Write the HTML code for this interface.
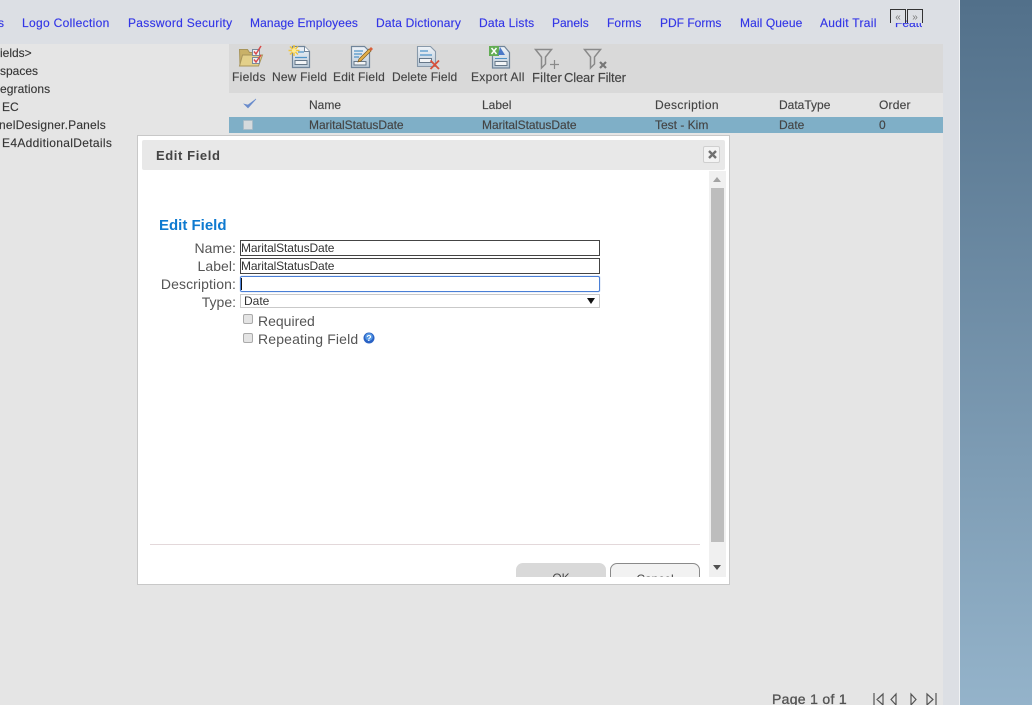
<!DOCTYPE html>
<html><head><meta charset="utf-8"><style>
html,body{margin:0;padding:0;width:1032px;height:705px;overflow:hidden;background:#e5e5e5;font-family:"Liberation Sans",Arial,sans-serif}
#p{position:relative;width:1032px;height:705px;overflow:hidden}
.a,.t,.n,.d{position:absolute}
.t,.n,.d{white-space:nowrap;line-height:14px}
.n{top:16px;font-size:12px;color:#3336e6;-webkit-text-stroke:.15px #3336e6}
.t{font-size:12px;color:#444;-webkit-text-stroke:.15px #444}
.d{font-size:14px;color:#555;text-align:right;line-height:16px}
.box{position:absolute;box-sizing:border-box;left:240px;width:360px;height:16px;border:1px solid #444;background:#fff;font-size:12px;line-height:14px;color:#333;padding-left:0;white-space:nowrap;letter-spacing:-.12px}
svg{position:absolute;overflow:visible}
</style></head><body><div id="p">
<div class="a" style="left:0;top:0;width:959px;height:705px;background:#dcdfe4"></div>
<div class="a" style="left:0;top:44px;width:943px;height:661px;background:#e5e5e5"></div>
<div class="a" style="left:959px;top:0;width:1px;height:705px;background:#f0f2f4"></div>
<div class="a" style="left:960px;top:0;width:72px;height:705px;background:linear-gradient(#52708a,#94b3ca)"></div>

<div class="n" style="left:-2px">s</div>
<div class="n" style="left:22px;letter-spacing:.33px">Logo Collection</div>
<div class="n" style="left:128px;letter-spacing:.3px">Password Security</div>
<div class="n" style="left:250px;letter-spacing:.12px">Manage Employees</div>
<div class="n" style="left:376px;letter-spacing:.2px">Data Dictionary</div>
<div class="n" style="left:479px;letter-spacing:.2px">Data Lists</div>
<div class="n" style="left:552px">Panels</div>
<div class="n" style="left:607px;letter-spacing:.1px">Forms</div>
<div class="n" style="left:660px">PDF Forms</div>
<div class="n" style="left:740px;letter-spacing:.1px">Mail Queue</div>
<div class="n" style="left:820px;letter-spacing:.3px">Audit Trail</div>
<div class="n" style="left:895px;width:27px;overflow:hidden;height:14px">Features</div>
<div class="a" style="left:890px;top:9px;width:14px;height:13px;border:1px solid #333;border-bottom:0;background:#dcdfe4;font-size:10px;line-height:16px;text-align:center;color:#777">«</div>
<div class="a" style="left:907px;top:9px;width:14px;height:13px;border:1px solid #333;border-bottom:0;background:#dcdfe4;font-size:10px;line-height:16px;text-align:center;color:#777">»</div>

<div class="t" style="left:0;top:46px;color:#333">ields&gt;</div>
<div class="t" style="left:0;top:64px;color:#333">spaces</div>
<div class="t" style="left:0;top:82px;color:#333;letter-spacing:.1px">egrations</div>
<div class="t" style="left:2px;top:100px;color:#333">EC</div>
<div class="t" style="left:-1px;top:118px;color:#333;letter-spacing:.2px">nelDesigner.Panels</div>
<div class="t" style="left:2px;top:136px;color:#333;letter-spacing:.32px">E4AdditionalDetails</div>

<div class="a" style="left:229px;top:44px;width:714px;height:49px;background:#d9d9d9"></div>
<div class="a" style="left:229px;top:117px;width:714px;height:16px;background:#7fafc7"></div>

<!-- Toolbar icons -->
<svg style="left:238px;top:45px" width="26" height="23" viewBox="0 0 26 23">
<path d="M1.500 4.500h8l2 3h9v13H2z" fill="#c9b168" stroke="#a8955a"/><path d="M1.500 21l3-11h20l-4 11z" fill="#e3d08a" stroke="#a8955a"/>
<rect x="14.500" y="4.500" width="7" height="6" fill="#eef2f6" stroke="#7a8a9a"/><rect x="14.500" y="12.500" width="7" height="6" fill="#eef2f6" stroke="#7a8a9a"/>
<path d="M16 6.500l2 2.500 5-8M16 14.500l2 2.500 5-7" fill="none" stroke="#d84a4a" stroke-width="1.500"/></svg>
<svg style="left:288px;top:45px" width="24" height="24" viewBox="0 0 24 24">
<defs><linearGradient id="g" x1="0" y1="0" x2="0" y2="1"><stop offset="0" stop-color="#eef3f8"/><stop offset="1" stop-color="#bccbd9"/></linearGradient></defs>
<path d="M4.500 1.500h12l5 5v16h-17z" fill="url(#g)" stroke="#70859a" stroke-width="1.200"/><path d="M16.500 1.500v5h5" fill="#fff" stroke="#70859a"/>
<path d="M10 7h6M7 12.500h12" stroke="#4f94c8" stroke-width="1.200"/><rect x="7" y="15.500" width="12" height="4" fill="#f2f4f6" stroke="#667788"/>
<path d="M6 0v11M.5 5.500h11M2 1.500l8 8M10 1.500l-8 8" stroke="#f2c63a" stroke-width="1.500"/><circle cx="6" cy="5.500" r="2.200" fill="#ffeb90"/></svg>
<svg style="left:350px;top:45px" width="24" height="24" viewBox="0 0 24 24">
<path d="M1.500 1.500h13l5 5v16h-18z" fill="url(#g)" stroke="#70859a" stroke-width="1.200"/><path d="M4 6h9M4 9h8M4 12h5" stroke="#4f94c8" stroke-width="1.200"/><rect x="4" y="16.500" width="12" height="3.500" fill="#f2f4f6" stroke="#667788"/>
<path d="M9 14l10-10 2 2-10 10-3 1z" fill="#e4b04a" stroke="#7a5a20" stroke-width=".7"/><path d="M19 4l2-2 2 2-2 2z" fill="#d9603a"/></svg>
<svg style="left:417px;top:45px" width="24" height="25" viewBox="0 0 24 25">
<path d="M.5 1.500h13l5 5v15h-18z" fill="url(#g)" stroke="#8899aa" stroke-width="1.100"/><path d="M3 6h8M3 10h12" stroke="#4f94c8" stroke-width="1.200"/><rect x="2.500" y="13.500" width="12" height="4" fill="#f2f4f6" stroke="#667788"/>
<path d="M13.500 15.500l8.500 8.500M22 15.500l-8.500 8.500" stroke="#d8503a" stroke-width="1.800"/></svg>
<svg style="left:489px;top:45px" width="24" height="25" viewBox="0 0 24 25">
<path d="M3.500 1.500h12l5 6v15.500h-17z" fill="url(#g)" stroke="#70859a" stroke-width="1.200"/><rect x="0" y="1" width="10" height="10" fill="#63ad55"/><path d="M2.500 3l5 6M7.500 3l-5 6" stroke="#fff" stroke-width="1.500"/>
<path d="M11 2l5 8h-7z" fill="#4a78c8"/><rect x="6" y="16.500" width="12" height="4" fill="#f2f4f6" stroke="#667788"/><path d="M6 13.500h12" stroke="#4f94c8"/></svg>
<svg style="left:534px;top:48px" width="26" height="22" viewBox="0 0 26 22">
<path d="M1.500 1.500h16l-6 7.500v7l-4 4v-11z" fill="none" stroke="#8a8a8a" stroke-width="1.500"/><path d="M16 16.500h9M20.500 12v9" stroke="#8a8a8a" stroke-width="1.200"/></svg>
<svg style="left:583px;top:48px" width="26" height="22" viewBox="0 0 26 22">
<path d="M1.500 1.500h16l-6 7.500v7l-4 4v-11z" fill="none" stroke="#8a8a8a" stroke-width="1.500"/><path d="M17 14l6 6M23 14l-6 6" stroke="#777" stroke-width="2.200"/></svg>

<div class="t" style="left:232px;top:70px;letter-spacing:.3px">Fields</div>
<div class="t" style="left:272px;top:70px;letter-spacing:.2px">New Field</div>
<div class="t" style="left:333px;top:70px;letter-spacing:.2px">Edit Field</div>
<div class="t" style="left:392px;top:70px;letter-spacing:.1px">Delete Field</div>
<div class="t" style="left:471px;top:70px;letter-spacing:.3px">Export All</div>
<div class="t" style="left:532px;top:71px;font-size:13px;letter-spacing:.2px">Filter</div>
<div class="t" style="left:564px;top:71px;font-size:13px;letter-spacing:-.15px">Clear Filter</div>

<!-- Grid -->
<svg style="left:243px;top:98px" width="14" height="11" viewBox="0 0 14 11"><path d="M1 6l4 4 8-9-8 6z" fill="#6a8ccc" stroke="#6a8ccc" stroke-width=".6"/></svg>
<div class="t" style="left:309px;top:98px">Name</div>
<div class="t" style="left:482px;top:98px">Label</div>
<div class="t" style="left:655px;top:98px;letter-spacing:.35px">Description</div>
<div class="t" style="left:779px;top:98px">DataType</div>
<div class="t" style="left:879px;top:98px;letter-spacing:.2px">Order</div>
<div class="a" style="left:243px;top:120px;width:8px;height:8px;background:#d5dadd;border:1px solid #a9bcc8;border-radius:1px"></div>
<div class="t" style="left:309px;top:118px;letter-spacing:-.05px">MaritalStatusDate</div>
<div class="t" style="left:482px;top:118px;letter-spacing:-.05px">MaritalStatusDate</div>
<div class="t" style="left:655px;top:118px">Test - Kim</div>
<div class="t" style="left:779px;top:118px">Date</div>
<div class="t" style="left:879px;top:118px">0</div>

<div class="t" style="left:772px;top:691px;font-size:14px;line-height:16px;color:#555;letter-spacing:.3px;-webkit-text-stroke:.35px #555">Page 1 of 1</div>
<svg style="left:873px;top:693px" width="66" height="12" viewBox="0 0 66 12" fill="none" stroke="#555" stroke-width="1.200">
<path d="M1 0v12M10 1L4 6.500l6 5.500zM23 1l-5 5.500 5 5.500zM38 1l5 5.500-5 5.500zM54 1l6 5.500-6 5.500zM63 0v12"/></svg>

<!-- Dialog -->
<div class="a" style="left:137px;top:135px;width:591px;height:448px;background:#fff;border:1px solid #c8c8c8;overflow:hidden">
 <div class="a" style="left:4px;top:4px;width:583px;height:30px;background:#e8e8e8;border-radius:2px"></div>
 <div class="a" style="left:18px;top:12px;font-size:13px;line-height:15px;font-weight:bold;color:#444;letter-spacing:.6px">Edit Field</div>
 <div class="a" style="left:565px;top:10px;width:15px;height:15px;background:#f3f3f3;border:1px solid #cfcfcf;border-radius:2px"></div>
 <svg style="left:570px;top:14px" width="9" height="9" viewBox="0 0 9 9"><path d="M1 1l7 7M8 1l-7 7" stroke="#707070" stroke-width="2.400"/></svg>
 <div class="a" style="left:0;top:0;width:591px;height:441px;overflow:hidden">
  <div class="a" style="left:571px;top:35px;width:17px;height:406px;background:#f0f0f0"></div>
  <div class="a" style="left:573px;top:52px;width:13px;height:354px;background:#bdbdbd"></div>
  <svg style="left:575px;top:41px" width="9" height="5"><path d="M0 5L4 0l4 5z" fill="#a3a3a3"/></svg>
  <svg style="left:575px;top:429px" width="9" height="5"><path d="M0 0l4 5 4-5z" fill="#505050"/></svg>
  <div class="a" style="left:12px;top:408px;width:550px;height:1px;background:#e3d8da"></div>
  <div class="a" style="left:378px;top:427px;width:90px;height:30px;border-radius:7px;background:#d9d9d9;font-size:12px;line-height:30px;text-align:center;color:#444">OK</div>
  <div class="a" style="left:472px;top:427px;width:88px;height:30px;border:1px solid #8a8a8a;border-radius:7px;background:#f2f2f2;font-size:12px;line-height:30px;text-align:center;color:#444">Cancel</div>
 </div>
</div>

<div class="t" style="left:159px;top:218px;font-size:15px;line-height:16px;font-weight:bold;color:#0e7ad0;-webkit-text-stroke:0">Edit Field</div>
<div class="d" style="left:130px;width:106px;top:240px;letter-spacing:.05px">Name:</div>
<div class="d" style="left:130px;width:106px;top:258px;letter-spacing:.05px">Label:</div>
<div class="d" style="left:130px;width:106px;top:276px;letter-spacing:.1px">Description:</div>
<div class="d" style="left:130px;width:106px;top:294px">Type:</div>
<div class="box" style="top:240px">MaritalStatusDate</div>
<div class="box" style="top:258px">MaritalStatusDate</div>
<div class="box" style="top:276px;border:1px solid #4a7fd6;border-radius:2px;box-shadow:0 0 1px #7aa0e0"><span class="a" style="left:0;top:1px;width:1px;height:12px;background:#111"></span></div>
<div class="box" style="top:294px;height:14px;border:1px solid #c9c9c9;padding-left:3px;line-height:12px;letter-spacing:0">Date<svg style="left:346px;top:3px" width="8" height="6"><path d="M0 0h8L4 6z" fill="#111"/></svg></div>
<div class="a" style="left:243px;top:314px;width:8px;height:8px;background:#e4e4e4;border:1px solid #aaa;border-radius:2px"></div>
<div class="a" style="left:243px;top:333px;width:8px;height:8px;background:#e4e4e4;border:1px solid #aaa;border-radius:2px"></div>
<div class="d" style="left:258px;top:313px">Required</div>
<div class="d" style="left:258px;top:331px;letter-spacing:.15px">Repeating Field</div>
<svg style="left:363px;top:332px" width="12" height="12" viewBox="0 0 12 12"><circle cx="6" cy="6" r="5.500" fill="#2a62c4"/><circle cx="6" cy="5" r="3.800" fill="#5a9ce6"/><text x="6" y="9" font-size="8.500" font-weight="bold" fill="#fff" text-anchor="middle" font-family="Liberation Sans">?</text></svg>
</div></body></html>
